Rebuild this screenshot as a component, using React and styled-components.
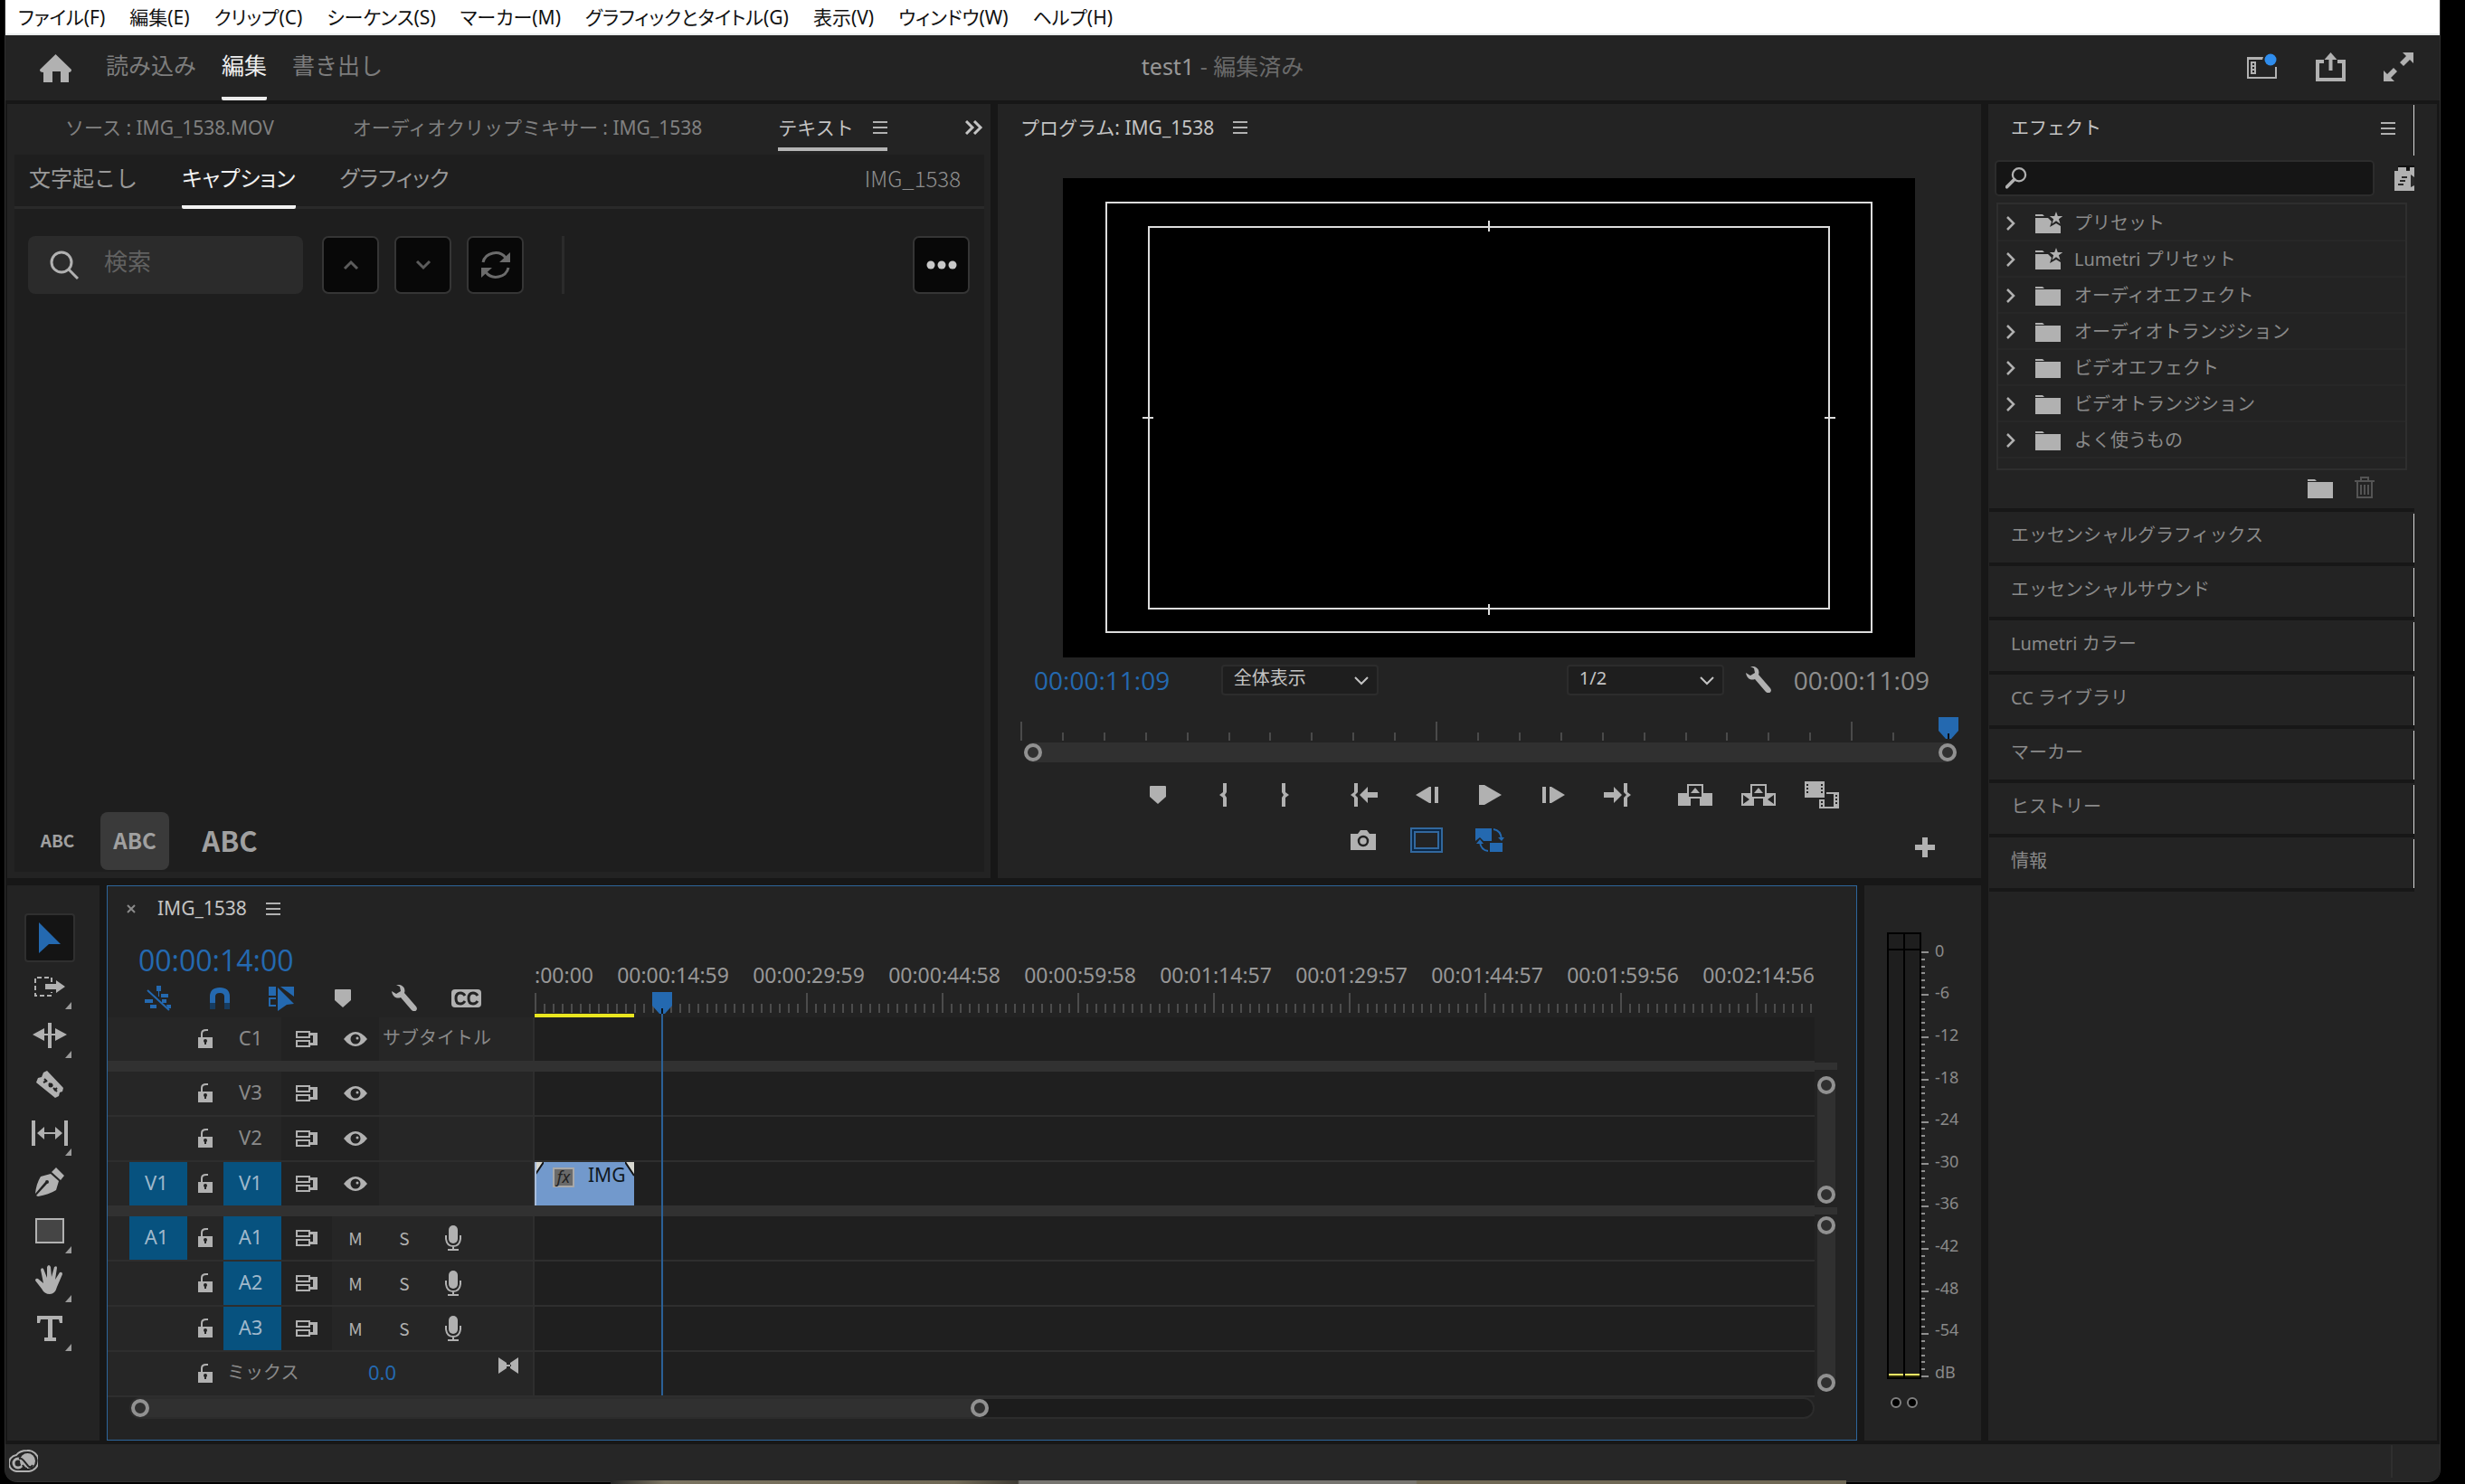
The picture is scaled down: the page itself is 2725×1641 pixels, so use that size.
import React, { useState } from "react";
import styled, { createGlobalStyle } from "styled-components";

const colors = {
  gutter: "#171717",
  panel: "#232323",
  inner: "#1e1e1e",
  line: "#2e2e2e",
  bar: "#303030",
  icon: "#b1b1b1",
  text: "#8a8a8a",
  bright: "#c4c4c4",
  blue: "#2469b0",
  patch: "#07527f",
};

const GlobalStyle = createGlobalStyle`
  * {
    box-sizing: border-box;
  }
  body {
    margin: 0;
    background: #000;
    color: ${colors.text};
    font-family: "Noto Sans", "Noto Sans CJK JP", sans-serif;
    font-size: 20px;
    line-height: 24px;
  }
  button, input, select {
    font: inherit;
    color: inherit;
    border: 0;
    padding: 0;
    margin: 0;
    background: none;
  }
  svg {
    display: block;
    flex: none;
  }
`;

// Window frame
const Page = styled.div`
  min-height: 100vh;
  display: flex;
  flex-direction: column;
  padding: 0 27px 0 5px;
`;

const Window = styled.div`
  flex: 1;
  display: flex;
  flex-direction: column;
  background: ${colors.gutter};
  border: solid #303030;
  border-width: 0 1px 1px;
  border-radius: 0 0 14px 14px;
  overflow: hidden;
`;

const DesktopStrip = styled.div`
  position: relative;
  height: 4px;
  margin: -2px 657px 0 670px;
  background: linear-gradient(90deg, #262626, #7b7461 60px, #6f6855 380px, #3d3a33 450px, #777570 452px, #777570 890px, #6f6855 892px);
`;

const MenuBar = styled.nav`
  display: flex;
  gap: 27px;
  height: 39px;
  padding: 1px 14px 0;
  background: #fff;
  border-bottom: 2px solid #e9ecec;
`;

const MenuItem = styled.button`
  color: #111;
  font-size: 21px;
  font-feature-settings: "palt";
  white-space: nowrap;
`;

const Header = styled.header`
  display: grid;
  grid-template-columns: 1fr auto 1fr;
  height: 72px;
  background: ${colors.panel};
`;

const HeaderLeft = styled.div`
  display: flex;
  align-items: stretch;
  padding-left: 38px;
`;

const HomeButton = styled.button`
  margin-right: 38px;
`;

const ModeTab = styled.button`
  font-size: 25px;
  margin-right: 28px;
  padding-bottom: 2px;
  color: ${(props) => (props.$active ? "#f0f0f0" : "#7d7d7d")};
  border-bottom: 4px solid ${(props) => (props.$active ? "#ececec" : "transparent")};
  border-radius: 2px;
`;

const ProjectTitle = styled.div`
  align-self: center;
  font-size: 25px;
  padding-bottom: 4px;
  color: #6a6a6a;

  strong {
    font-weight: 400;
    color: #979797;
  }
`;

const HeaderRight = styled.div`
  display: flex;
  justify-content: flex-end;
  align-items: center;
  gap: 42px;
  padding: 0 29px 3px 0;
`;

const Workspace = styled.main`
  flex: 1;
  display: grid;
  grid-template-columns: minmax(0, 1fr) 496px;
  gap: 8px;
  padding: 4px 3px 4px 2px;
`;

const MainColumn = styled.div`
  display: flex;
  flex-direction: column;
  gap: 8px;
`;

const Upper = styled.div`
  display: grid;
  grid-template-columns: 1fr 1fr;
  gap: 8px;
`;

const Lower = styled.div`
  flex: 1;
  display: grid;
  grid-template-columns: 102px minmax(0, 1fr) 129px;
  gap: 8px;
`;

const Panel = styled.section`
  background: ${colors.panel};
  display: flex;
  flex-direction: column;
`;

const PanelTabs = styled.div`
  display: flex;
  height: 56px;
  padding: 0 8px 4px ${(props) => props.$indent || 25}px;
  font-size: 21px;
`;

const PanelTab = styled.button`
  display: flex;
  align-items: center;
  gap: 21px;
  margin-right: ${(props) => props.$after || 0}px;
  padding-top: 3px;
  color: ${(props) => (props.$active ? colors.bright : "#808080")};
  border-bottom: 4px solid ${(props) => (props.$underline ? "#b5b5b5" : "transparent")};
  white-space: nowrap;
`;

const Spacer = styled.div`
  flex: 1;
`;

// Text panel
const TextBody = styled.div`
  flex: 1;
  display: flex;
  flex-direction: column;
  margin: 0 7px 7px 8px;
  background: ${colors.inner};
`;

const SubTabs = styled.div`
  display: flex;
  height: 60px;
  padding: 0 26px 0 16px;
  border-bottom: 3px solid #2a2a2a;
  font-size: 24px;
`;

const SubTab = styled.button`
  height: 60px;
  margin-right: 49px;
  padding-bottom: 4px;
  font-feature-settings: ${(props) => (props.$tight ? '"palt"' : "normal")};
  color: ${(props) => (props.$active ? "#f2f2f2" : "#999")};
  border-bottom: 4px solid ${(props) => (props.$active ? "#f2f2f2" : "transparent")};
  border-radius: 2px;
`;

const ClipName = styled.span`
  align-self: center;
  padding-bottom: 6px;
  font-family: "Noto Sans CJK JP", sans-serif;
  font-weight: 300;
  color: #8f8f8f;
`;

const SearchRow = styled.div`
  display: flex;
  gap: 17px;
  padding: 30px 16px 0 15px;
`;

const CaptionSearch = styled.label`
  display: flex;
  align-items: center;
  gap: 28px;
  width: 304px;
  height: 64px;
  margin-right: 4px;
  padding-left: 24px;
  background: #2b2b2b;
  border-radius: 8px;

  input {
    width: 180px;
    padding-bottom: 8px;
    font-size: 26px;
    line-height: 30px;
    outline: 0;
  }
  input::placeholder {
    color: #616161;
  }
`;

const SquareButton = styled.button`
  display: grid;
  place-items: center;
  width: 63px;
  height: 64px;
  background: #080808;
  border: 2px solid #353535;
  border-radius: 7px;
`;

const Divider = styled.div`
  width: 3px;
  margin-left: 25px;
  background: #2b2b2b;
`;

const SizeRow = styled.div`
  display: flex;
  align-items: center;
  height: 66px;
  padding-bottom: 2px;
`;

const SizeButton = styled.button`
  width: ${(props) => props.$width}px;
  height: 64px;
  padding-bottom: 2px;
  font-size: ${(props) => props.$size}px;
  font-family: "Noto Sans CJK JP", sans-serif;
  font-weight: 700;
  color: #a0a0a0;
  background: ${(props) => (props.$active ? "#3a3a3a" : "transparent")};
  border-radius: 8px;
`;

// Program monitor
const Screen = styled.div`
  position: relative;
  aspect-ratio: 16 / 9;
  margin: 26px 73px 8px 72px;
  background: #000;
`;

const SafeArea = styled.div`
  position: absolute;
  inset: ${(props) => props.$inset};
  border: 2px solid #dcdcdc;
`;

const SafeTick = styled.div`
  position: absolute;
  background: #dcdcdc;
  width: ${(props) => (props.$vertical ? 2 : 12)}px;
  height: ${(props) => (props.$vertical ? 12 : 2)}px;
  top: ${(props) => props.$top};
  left: ${(props) => props.$left};
  transform: translate(-50%, -50%);
`;

const MonitorControls = styled.div`
  display: flex;
  align-items: center;
  height: 34px;
  padding: 0 57px 0 40px;
`;

const Timecode = styled.span`
  font-family: "Open Sans", "Noto Sans", sans-serif;
  font-size: ${(props) => props.$size}px;
  line-height: 36px;
  font-weight: 500;
  color: ${(props) => (props.$muted ? "#8f8f8f" : colors.blue)};
`;

const SelectBox = styled.label`
  position: relative;
  display: block;
  width: 174px;
  height: 34px;
  background: ${colors.inner};
  border: 2px solid #2c2c2c;
  border-radius: 4px;

  select {
    width: 100%;
    height: 26px;
    padding-left: 12px;
    appearance: none;
    color: ${colors.bright};
    font-size: 20px;
    line-height: 24px;
  }
  svg {
    position: absolute;
    right: 8px;
    top: 8px;
  }
`;

const MonitorRuler = styled.div`
  position: relative;
  margin: 24px 25px 0;
`;

const RulerCells = styled.div`
  display: grid;
  grid-template-columns: repeat(22, 1fr);
  align-items: end;
  height: 28px;
  padding: 0 27px 2px 0;
`;

const RulerCell = styled.div`
  height: ${(props) => (props.$major ? 21 : 9)}px;
  border-left: 2px solid #4a4a4a;
`;

const HandleBar = styled.div`
  display: flex;
  flex-direction: ${(props) => (props.$vertical ? "column" : "row")};
  justify-content: space-between;
  align-items: center;
  background: ${colors.bar};
  border-radius: 11px;
`;

const MonitorBar = styled(HandleBar)`
  height: 22px;
  margin: 0 2px 0 4px;
`;

const Handle = styled.button`
  width: 20px;
  height: 20px;
  border: 4px solid #919191;
  border-radius: 50%;
`;

const MonitorPlayhead = styled.div`
  position: absolute;
  top: 0;
  right: 0;
`;

const Transport = styled.div`
  display: flex;
  justify-content: center;
  height: 50px;
  margin-top: 11px;
`;

const TransportButton = styled.button`
  display: grid;
  place-items: center;
  width: ${(props) => props.$width || 70}px;
  height: 50px;
`;

const TransportGroup = styled.div`
  display: flex;
  margin-right: ${(props) => props.$after || 0}px;
`;

const SecondRow = styled.div`
  display: grid;
  grid-template-columns: 1fr auto 1fr;
  align-items: center;
  height: 50px;
  margin-bottom: 17px;
  padding: 0 51px;
`;

const FrameTools = styled(TransportGroup)`
  grid-column: 2;
`;

const AddButton = styled.button`
  justify-self: end;
  padding-top: 16px;
`;

// Effects panel
const SidePanel = styled(Panel)`
  padding-right: 25px;
`;

const SideTitle = styled.div`
  display: flex;
  justify-content: space-between;
  align-items: center;
  height: 56px;
  margin-top: 1px;
  padding: 0 20px 4px 25px;
  color: ${colors.bright};
  border-right: 1px solid #d8d8d8;
`;

const EffectSearchRow = styled.div`
  display: flex;
  align-items: center;
  justify-content: space-between;
  padding: 5px 0 7px 7px;
`;

const EffectSearch = styled.label`
  display: flex;
  align-items: center;
  gap: 12px;
  width: 420px;
  height: 40px;
  padding-left: 10px;
  background: #151515;
  border: 2px solid #2c2c2c;
  border-radius: 5px;

  input {
    flex: 1;
    outline: 0;
  }
`;

const EffectList = styled.ul`
  margin: 0 8px 0 9px;
  padding: 1px 0 11px;
  list-style: none;
  border: 2px solid ${colors.line};
`;

const EffectItem = styled.li`
  border-bottom: 2px solid #272727;
`;

const EffectButton = styled.button`
  display: flex;
  align-items: center;
  width: 100%;
  height: 38px;
  padding: 2px 0 0 9px;
`;

const EffectIcon = styled.span`
  width: 30px;
  margin: 0 13px 2px 20px;
`;

const EffectFooter = styled.div`
  display: flex;
  justify-content: flex-end;
  align-items: center;
  gap: 24px;
  height: 42px;
  padding: 0 44px 4px 0;
`;

const Collapsed = styled.button`
  height: 60px;
  margin-left: 1px;
  padding: 0 0 4px 24px;
  text-align: left;
  border-top: 4px solid ${colors.gutter};
  background: linear-gradient(#d8d8d8, #d8d8d8) no-repeat right 2px / 1px 100%;
`;

const CollapsedEnd = styled.div`
  height: 4px;
  margin-left: 1px;
  background: ${colors.gutter};
`;

// Tools
const ToolPanel = styled(Panel)`
  align-items: center;
  padding: 31px 8px 0 0;
`;

const Tool = styled.button`
  position: relative;
  display: grid;
  place-items: center;
  width: 56px;
  height: 54px;
  background: ${(props) => (props.$active ? "#141414" : "transparent")};
  border: 2px solid ${(props) => (props.$active ? "#2f2f2f" : "transparent")};
  border-radius: 4px;
`;

const Corner = styled.span`
  position: absolute;
  right: 2px;
  bottom: 0;
  width: 7px;
  height: 8px;
  background: #9a9a9a;
  clip-path: polygon(100% 0, 100% 100%, 0 100%);
`;

// Timeline
const Timeline = styled(Panel)`
  border: 1px solid #2d659b;
`;

const TimelineTabs = styled.div`
  display: flex;
  align-items: center;
  height: 50px;
  padding-left: 21px;
  font-size: 21px;
  color: ${colors.bright};

  span {
    margin: 0 21px 2px 24px;
  }
`;

const TimelineBody = styled.div`
  display: flex;
`;

const TrackArea = styled.div`
  position: relative;
  flex: 1;
  min-width: 0;
`;

const TimelineTop = styled.div`
  display: flex;
  height: 95px;
`;

const TimelineTools = styled.div`
  width: 472px;
  padding: 14px 0 0 34px;
`;

const ToolStrip = styled.div`
  display: flex;
  padding-top: 4px;
  margin-left: -12px;
`;

const StripButton = styled.button`
  display: grid;
  place-items: center;
  width: 68px;
  height: 40px;
`;

const Ruler = styled.div`
  flex: 1;
  min-width: 0;
  overflow: hidden;
  padding-top: 35px;
`;

const RulerLabels = styled.div`
  display: flex;
  font-size: 23px;
  line-height: 26px;
  color: #979797;
  white-space: nowrap;
`;

const RulerLabel = styled.span`
  flex: none;
  width: ${(props) => (props.$first ? 78 : 150)}px;
  text-align: ${(props) => (props.$first ? "left" : "center")};
`;

const RulerTicks = styled.div`
  height: 22px;
  margin-top: 7px;
  background: repeating-linear-gradient(90deg, #4c4c4c 0 2px, transparent 2px 150px),
    repeating-linear-gradient(90deg, #4c4c4c 0 2px, transparent 2px 10px) bottom / 100% 10px no-repeat;
`;

const RenderBar = styled.div`
  width: 110px;
  height: 4px;
  margin-top: 1px;
  background: #e9e61f;
`;

const Track = styled.div`
  display: flex;
  height: 50px;
  border-bottom: 2px solid ${colors.line};
`;

const TrackGap = styled.div`
  height: ${(props) => props.$height}px;
  margin-top: -2px;
  background: #313131;
`;

const TrackHead = styled.div`
  display: flex;
  align-items: center;
  width: 472px;
  padding-left: 24px;
  background: #262626;
  border-right: 2px solid ${colors.line};
`;

const Lane = styled.div`
  flex: 1;
  display: flex;
  background: #1f1f1f;
`;

const Patch = styled.button`
  width: 64px;
  height: 48px;
  padding: 0 4px 4px 0;
  font-size: 22px;
  background: ${(props) => (props.$on ? colors.patch : "transparent")};
  color: ${(props) => (props.$on ? "#9fb8cb" : "#8a8a8a")};
`;

const Cell = styled.button`
  display: grid;
  place-items: center;
  width: ${(props) => props.$width}px;
  height: 48px;
  background: ${(props) => (props.$dark ? "#222" : "transparent")};
  color: #b1b1b1;
  font-size: 19px;
  line-height: 20px;
  font-family: "Noto Sans CJK JP", sans-serif;
`;

const TrackName = styled.span`
  padding: 0 0 2px 4px;
`;

const MixName = styled.span`
  width: 160px;
  padding: 0 0 2px 4px;
`;

const MixValue = styled.button`
  width: 144px;
  padding-bottom: 4px;
  text-align: left;
  font-size: 22px;
  color: ${colors.blue};
`;

const KeyframeButton = styled.button`
  align-self: flex-start;
  padding-top: 6px;
`;

const Clip = styled.div`
  position: relative;
  display: flex;
  gap: 15px;
  width: 110px;
  height: 48px;
  padding: 6px 0 0 18px;
  overflow: hidden;
  background: #7299cc;
  color: #101820;
  border: solid #a9bddb;
  border-width: 0 0 0 2px;
  font-size: 21px;
  line-height: 16px;
`;

const FxBadge = styled.span`
  width: 24px;
  height: 22px;
  background: #6a6a6a;
  border: 2px solid #a8a8a8;
  color: #222;
  font: italic 18px/17px "Noto Sans", sans-serif;
  text-align: center;
`;

const Fold = styled.svg`
  position: absolute;
  top: 0;
  left: ${(props) => (props.$right ? "auto" : "-2px")};
  right: ${(props) => (props.$right ? "0" : "auto")};
`;

const Playhead = styled.div`
  position: absolute;
  top: 67px;
  bottom: 2px;
  left: 602px;
  width: 22px;

  &::after {
    content: "";
    position: absolute;
    top: 24px;
    bottom: 0;
    left: 10px;
    width: 2px;
    background: #2b6096;
  }
`;

const ScrollColumn = styled.div`
  display: flex;
  flex-direction: column;
  width: 25px;
  margin: 145px 21px 0 0;
`;

const ScrollGap = styled.div`
  height: 8px;
  background: #313131;
`;

const TrackScroll = styled(HandleBar)`
  width: 20px;
  height: ${(props) => props.$height}px;
  margin: ${(props) => props.$top}px 3px 4px;
`;

const ZoomRow = styled.div`
  display: flex;
  height: 24px;
  margin: 0 46px 0 24px;
  border: 2px solid #2c2c2c;
  border-radius: 12px;
  background: #1c1c1c;
`;

const ZoomBar = styled(HandleBar)`
  width: 51%;
`;

// Audio meters
const MeterPanel = styled(Panel)`
  padding: 52px 0 0 25px;
`;

const MeterRow = styled.div`
  display: flex;
`;

const Meter = styled.div`
  display: grid;
  grid-template-columns: 1fr 1fr;
  grid-template-rows: 16px 472px;
  gap: 2px;
  width: 38px;
  height: 494px;
  padding: 2px;
  background: #000;
`;

const MeterCell = styled.div`
  background: ${colors.inner};
`;

const MeterLevel = styled.div`
  background: ${colors.inner};
  border-bottom: 2px solid #2c2a08;
  box-shadow: inset 0 -2px #efe765;
`;

const Scale = styled.div`
  width: 8px;
  margin-top: 21px;
`;

const ScaleLabels = styled.ol`
  display: flex;
  flex-direction: column;
  justify-content: space-between;
  height: 490px;
  margin: 8px 0 0 7px;
  padding: 0;
  list-style: none;
  font-size: 18px;
`;

const SoloRow = styled.div`
  display: flex;
  gap: 6px;
  padding: 16px 0 0 4px;
`;

const Solo = styled.button`
  width: 12px;
  height: 12px;
  background: #000;
  border: 2px solid #808080;
  border-radius: 50%;
`;

const StatusBar = styled.footer`
  display: flex;
  align-items: center;
  height: 41px;
  padding: 0 52px 4px 4px;
  background: #262626;
`;

const StatusLine = styled.div`
  width: 2px;
  height: 36px;
  margin-left: auto;
  background: #2f2f2f;
`;

// Icons
const Svg = ({ w, h, children, color = colors.icon }) => (
  <svg width={w} height={h} viewBox={`0 0 ${w} ${h}`} fill={color} stroke="none" aria-hidden="true">
    {children}
  </svg>
);

const Burger = () => (
  <Svg w={16} h={14}>
    <path d="M0 0h16v2H0zM0 6h16v2H0zM0 12h16v2H0z" />
  </Svg>
);

const Chevron = ({ dir = "down", color = colors.icon, w = 3 }) => {
  const paths = { down: "M2 4l7 7 7-7", up: "M2 12l7-7 7 7" };
  return (
    <svg width="18" height="16" viewBox="0 0 18 16" fill="none" stroke={color} strokeWidth={w} aria-hidden="true">
      <path d={paths[dir]} />
    </svg>
  );
};

const Home = () => (
  <Svg w={35} h={31}>
    <path d="M17.5 0L35 17c0 2-1 3-3 3v11h-9V19h-9v12H4V20c-3 0-4-1-4-3z" />
  </Svg>
);

const Magnifier = ({ flip }) => (
  <svg width={flip ? 24 : 32} height={flip ? 24 : 32} viewBox="0 0 32 32" fill="none" stroke={colors.icon} strokeWidth="3" aria-hidden="true">
    {flip ? (
      <g>
        <circle cx="20" cy="11" r="9.5" />
        <path d="M13 18L2 29" strokeWidth="5" strokeLinecap="round" />
      </g>
    ) : (
      <g>
        <circle cx="13" cy="13" r="11" />
        <path d="M21 21l10 10" />
      </g>
    )}
  </svg>
);

const Refresh = () => (
  <svg width="34" height="32" viewBox="0 0 34 32" fill="none" stroke="#6b6b6b" strokeWidth="3" aria-hidden="true">
    <path d="M3 13A14 13 0 0 1 28 8M31 19A14 13 0 0 1 6 24" />
    <path d="M33 2v11H21zM1 30V19h12z" fill="#6b6b6b" stroke="none" />
  </svg>
);

const Dots = () => (
  <Svg w={34} h={10} color="#c8c8c8">
    <circle cx="5" cy="5" r="4.5" />
    <circle cx="17" cy="5" r="4.5" />
    <circle cx="29" cy="5" r="4.5" />
  </Svg>
);

const Wrench = () => (
  <Svg w={28} h={29}>
    <path d="M5 0c6-1 11 3 9 9l13 15c3 4-2 7-5 4L10 14C5 16 1 13 0 7l5 3 5-3-1-5z" />
  </Svg>
);

const MarkerIcon = () => (
  <Svg w={18} h={20}>
    <path d="M0 1q0-1 1-1h16q1 0 1 1v11l-9 8-9-8z" />
  </Svg>
);

const PlayheadIcon = () => (
  <Svg w={22} h={24} color={colors.blue}>
    <path d="M0 0h22v15l-8 9H8L0 15z" />
    <path d="M10 18h2v6h-2z" fill="#0b1118" />
  </Svg>
);

const Folder = ({ star }) => (
  <Svg w={star ? 30 : 28} h={24}>
    {star ? (
      <g>
        <path d="M0 3h8l2 2H0zM0 7h14l4 4-2 6 7-4 5 3v8H0z" />
        <path d="M23 0l1.8 5h5.4l-4.3 3.3 1.6 5.2L23 10.300l-4.500 3.200 1.600-5.200L15.800 5h5.400z" />
      </g>
    ) : (
      <path d="M0 3h8l2 2H0zM0 6h28v18H0z" />
    )}
  </Svg>
);

const Trash = () => (
  <svg width="22" height="24" viewBox="0 0 22 24" fill="none" stroke="#545454" strokeWidth="2" aria-hidden="true">
    <path d="M0 5h22M7 5V1h8v4M3 6v17h16V6M7 9v11M11 9v11M15 9v11" />
  </svg>
);

const Fx32 = () => (
  <Svg w={22} h={28}>
    <path d="M4 0h14v5H4zM18 0h4v5h-4z" fill="#101010" />
    <path d="M0 6h4V2h9v4h4V2h5v26H0z" />
    <path d="M8 12h6v2H8zM6 16h6v2H6zM4 20h6v2H4zM18 10l4 3v9l-4 2z" fill="#2a2a2a" />
  </Svg>
);

const WorkspaceIcon = () => (
  <Svg w={34} h={30}>
    <path d="M0 4h18l-1 3H2v19h29V15h2v13H0z" />
    <path fillRule="evenodd" d="M4 9h6v14H4zM6 11v2h2v-2zM6 15v2h2v-2zM6 19v2h2v-2z" />
    <circle cx="26" cy="7" r="6.5" fill="#2f8ded" />
  </Svg>
);

const ShareIcon = () => (
  <Svg w={33} h={32}>
    <path d="M0 8h9v4H4v16h25V12h-5V8h9v24H0z" />
    <path d="M16.5 0l7 8h-5v12h-4V8h-5z" />
  </Svg>
);

const ExpandIcon = () => (
  <Svg w={33} h={32}>
    <path d="M21 0h12v12l-4-4-7 7-4-4 7-7zM12 32H0V20l4 4 7-7 4 4-7 7z" />
  </Svg>
);

const Brace = ({ right }) => (
  <Svg w={8} h={26}>
    {right ? <path d="M0 0h4v10l4 3-4 3v10H0V16l2-3-2-3z" /> : <path d="M8 0H4v10l-4 3 4 3v10h4V16l-2-3 2-3z" />}
  </Svg>
);

const GoIn = ({ out }) => (
  <Svg w={30} h={26}>
    <g transform={out ? "matrix(-1 0 0 1 30 0)" : undefined}>
      <path d="M8 0H4v10l-4 3 4 3v10h4V16l-3-3 3-3zM10 13l9-9v6h11v6H19v6z" />
    </g>
  </Svg>
);

const Step = ({ forward }) => (
  <Svg w={25} h={18}>
    <g transform={forward ? "matrix(-1 0 0 1 25 0)" : undefined}>
      <path d="M0 9L15 0h2v18h-2zM21 0h4v18h-4z" />
    </g>
  </Svg>
);

const Play = () => (
  <Svg w={25} h={22}>
    <path d="M0 0h6l19 11L6 22H0z" />
  </Svg>
);

const Lift = ({ extract }) => (
  <Svg w={38} h={24}>
    <path fillRule="evenodd" d="M10 10V0h18v10h10v14H24v-8H14v8H0V10zM12 2v12h14V2z" />
    <path d="M19 4l5 6H14z" />
    {extract && <path d="M2 12v10l7-5zM36 12v10l-7-5z" fill={colors.panel} />}
  </Svg>
);

const Compare = () => (
  <Svg w={38} h={30}>
    <path d="M0 0h22v18H0z" />
    <path fillRule="evenodd" d="M24 12h14v18H16V20h6v8h10V14h-8z" />
    <path
      d="M2 3h2v2H2zM2 7h2v2H2zM2 11h2v2H2zM18 3h2v2h-2zM18 7h2v2h-2zM18 11h2v2h-2zM34 15h2v2h-2zM34 19h2v2h-2zM34 23h2v2h-2zM18 22h2v2h-2zM18 26h2v2h-2z"
      fill={colors.panel}
    />
  </Svg>
);

const Camera = () => (
  <Svg w={28} h={22}>
    <path d="M0 4h8l3-4h7l3 4h7v18H0z" />
    <circle cx="14" cy="12" r="5" fill="none" stroke="#222" strokeWidth="2.5" />
  </Svg>
);

const SafeIcon = () => (
  <svg width="36" height="28" viewBox="0 0 36 28" fill="none" stroke="#32689e" strokeWidth="2" aria-hidden="true">
    <path d="M1 1h34v26H1z" fill="#0b2745" />
    <path d="M5 5h26v18H5z" fill={colors.panel} />
  </svg>
);

const ProxyIcon = () => (
  <Svg w={32} h={26} color={colors.blue}>
    <path d="M0 0h18v14H9l-4-4-5 4zM16 16h14v10H16z" />
    <path d="M20 1q8 1 9 11M5 15q1 9 9 10" fill="none" stroke={colors.blue} strokeWidth="2" />
    <path d="M25 10h7l-3 4zM1 17h8l-4-5z" />
  </Svg>
);

const Plus = () => (
  <Svg w={22} h={22}>
    <path d="M8 0h6v8h8v6h-8v8H8v-8H0V8h8z" />
  </Svg>
);

const Lock = () => (
  <Svg w={16} h={21}>
    <path fillRule="evenodd" d="M0 9h16v12H0zM7 12v5h2v-5z" />
    <path d="M4 10V5q0-4 5-4h2" fill="none" stroke={colors.icon} strokeWidth="2" />
    <circle cx="8" cy="13" r="2" fill="#222" />
  </Svg>
);

const Sync = () => (
  <Svg w={24} h={18}>
    <path fillRule="evenodd" d="M0 0h16v8H0zM2 2v4h12V2zM0 10h16v8H0zM2 12v4h12v-4z" />
    <path d="M15 2h9v14h-9v-3h4V5h-4z" />
  </Svg>
);

const Eye = () => (
  <Svg w={26} h={16}>
    <path d="M0 8q13-16 26 0-13 16-26 0z" />
    <circle cx="13" cy="8" r="5.5" fill="#222" />
    <circle cx="15" cy="7" r="1.5" />
  </Svg>
);

const Mic = () => (
  <Svg w={18} h={28}>
    <rect x="4" y="0" width="10" height="20" rx="5" />
    <path d="M1 11v4q1 8 8 8t8-8v-4M9 23v4M3 27h12" fill="none" stroke={colors.icon} strokeWidth="2" />
  </Svg>
);

const Bowtie = () => (
  <Svg w={22} h={18}>
    <path d="M0 0l9 6v6l-9 6zM22 0l-9 6v6l9 6zM8 8h6v2H8z" />
  </Svg>
);

const NestIcon = () => (
  <Svg w={30} h={28} color={colors.blue}>
    <path d="M13 0h5v6h-2v6h-1V6h-2zM18 9h8v4h-8zM0 15h9v4H0zM19 15h5v4h-5zM6 21h7v4H6zM24 21h5v4h-4z" />
    <path d="M3 5l24 22" stroke={colors.blue} strokeWidth="2" />
  </Svg>
);

const Magnet = () => (
  <svg width="24" height="26" viewBox="0 0 24 26" fill="none" strokeWidth="6" aria-hidden="true">
    <path d="M4 18v-7q0-7 8-7t8 7v7" stroke={colors.blue} />
    <path d="M4 18v7M20 18v7" stroke="#173c60" />
  </svg>
);

const Linked = () => (
  <Svg w={28} h={28} color={colors.blue}>
    <path d="M0 1h8v10H0zM13 1h15v11zM10 2l18 18-8 1-10 7z" />
    <path d="M8 14H1v8h7" fill="none" stroke={colors.blue} strokeWidth="2" />
  </Svg>
);

const CcIcon = () => (
  <Svg w={33} h={20}>
    <rect width="33" height="20" rx="4" />
    <path d="M15 7q-2-3-5-3-5 0-5 6t5 6q3 0 5-3M29 7q-2-3-5-3-5 0-5 6t5 6q3 0 5-3" fill="none" stroke="#222" strokeWidth="3" />
  </Svg>
);

const CreativeCloud = () => (
  <Svg w={32} h={25}>
    <path d="M20 1a11 11 0 0 1 2 23H10A9 9 0 0 1 8 6q4-5 12-5z" fill="none" stroke={colors.icon} strokeWidth="2" />
    <circle cx="20.500" cy="12.500" r="8.500" />
    <circle cx="10" cy="15" r="5" fill="none" stroke={colors.icon} strokeWidth="3" />
    <path d="M11 10q3-1 5 2l5 6q3 3 5-1M15 17q2 4 5 4" fill="none" stroke="#262626" strokeWidth="2" />
  </Svg>
);

const toolIcons = {
  選択: (
    <Svg w={24} h={34} color={colors.blue}>
      <path d="M0 0l24 24H11L0 34z" />
    </Svg>
  ),
  トラック選択: (
    <Svg w={34} h={22}>
      <path d="M1 7V1h18v5M1 10v11h18v-4" fill="none" stroke={colors.icon} strokeWidth="2" strokeDasharray="5 3" />
      <path d="M12 8h12V4l10 7-10 7v-4H12z" />
    </Svg>
  ),
  リップル: (
    <Svg w={38} h={28}>
      <path d="M17 0h4v28h-4zM0 13l13-7v6h12V6l13 7-13 7v-6H13v6z" />
    </Svg>
  ),
  レーザー: (
    <Svg w={30} h={30}>
      <path d="M8 2l4-2 18 19-1 4-3 1-1 4-4 2L0 13l2-5 4-1z" />
      <path d="M9 9l3 3M14 14l4 3M19 19l4 4M8 13l4-2M20 22l3-3" stroke="#222" strokeWidth="2" />
      <circle cx="16" cy="16" r="2.5" fill="#222" />
    </Svg>
  ),
  スリップ: (
    <Svg w={40} h={28}>
      <path d="M0 0h4v28H0zM36 0h4v28h-4zM6 14l8-7v6h12V7l8 7-8 7v-6H14v6z" />
    </Svg>
  ),
  ペン: (
    <Svg w={32} h={32}>
      <path d="M23 0l9 9-4 5-10-9zM17 7l9 8-3 10q-8 5-20 7l-2-1 12-13a2 2 0 1 0-2-2L0 29Q1 18 6 10z" />
    </Svg>
  ),
  長方形: (
    <svg width="32" height="28" viewBox="0 0 32 28" fill="#454545" stroke={colors.icon} strokeWidth="2" aria-hidden="true">
      <path d="M1 1h30v26H1z" />
    </svg>
  ),
  手のひら: (
    <Svg w={32} h={33}>
      <path d="M9 21L6 6q1-3 3-1l4 10V3q2-4 4 0l1 11 3-11q3-2 3 1l-2 13 5-8q3-1 3 2l-6 14q-2 8-8 8-6 0-9-6l-7-9q0-3 3-2z" />
    </Svg>
  ),
  文字: (
    <Svg w={28} h={28}>
      <path d="M0 0h28v8h-3l-1-4h-7v20h4v4H8v-4h4V4H4L3 8H0z" />
    </Svg>
  ),
};

const menus = [
  "ファイル(F)",
  "編集(E)",
  "クリップ(C)",
  "シーケンス(S)",
  "マーカー(M)",
  "グラフィックとタイトル(G)",
  "表示(V)",
  "ウィンドウ(W)",
  "ヘルプ(H)",
];

const effects = [
  { name: "プリセット", star: true },
  { name: "Lumetri プリセット", star: true },
  { name: "オーディオエフェクト" },
  { name: "オーディオトランジション" },
  { name: "ビデオエフェクト" },
  { name: "ビデオトランジション" },
  { name: "よく使うもの" },
];

const collapsed = [
  "エッセンシャルグラフィックス",
  "エッセンシャルサウンド",
  "Lumetri カラー",
  "CC ライブラリ",
  "マーカー",
  "ヒストリー",
  "情報",
];

const rulerLabels = [
  "00:00:14:59",
  "00:00:29:59",
  "00:00:44:58",
  "00:00:59:58",
  "00:01:14:57",
  "00:01:29:57",
  "00:01:44:57",
  "00:01:59:56",
  "00:02:14:56",
];

const levels = ["0", "-6", "-12", "-18", "-24", "-30", "-36", "-42", "-48", "-54", "dB"];

const VideoTrack = ({ id, source, targeted, name, children }) => (
  <Track>
    <TrackHead>
      <Patch $on={!!source} aria-label={source ? undefined : "ソースのパッチ"}>{source}</Patch>
      <Cell $width={40} aria-label="ロック"><Lock /></Cell>
      <Patch $on={targeted}>{id}</Patch>
      <Cell $width={56} $dark aria-label="同期ロック"><Sync /></Cell>
      <Cell $width={52} $dark aria-label="トラック出力"><Eye /></Cell>
      <TrackName>{name}</TrackName>
    </TrackHead>
    <Lane>{children}</Lane>
  </Track>
);

const AudioTrack = ({ id, source }) => (
  <Track>
    <TrackHead>
      <Patch $on={!!source} aria-label={source ? undefined : "ソースのパッチ"}>{source}</Patch>
      <Cell $width={40} aria-label="ロック"><Lock /></Cell>
      <Patch $on>{id}</Patch>
      <Cell $width={56} $dark aria-label="同期ロック"><Sync /></Cell>
      <Cell $width={52}>M</Cell>
      <Cell $width={56}>S</Cell>
      <Cell $width={52} aria-label="録音"><Mic /></Cell>
    </TrackHead>
    <Lane />
  </Track>
);

const TextPanel = () => {
  const [tab, setTab] = useState("キャプション");
  return (
    <Panel>
      <PanelTabs $indent={64}>
        <PanelTab $after={87}>ソース : IMG_1538.MOV</PanelTab>
        <PanelTab $after={84}>オーディオクリップミキサー : IMG_1538</PanelTab>
        <PanelTab $active $underline>
          テキスト <Burger />
        </PanelTab>
        <Spacer />
        <PanelTab $active aria-label="その他のパネル">
          <svg width="20" height="16" viewBox="0 0 20 16" fill="none" stroke={colors.bright} strokeWidth="3">
            <path d="M1 1l7 7-7 7M10 1l7 7-7 7" />
          </svg>
        </PanelTab>
      </PanelTabs>
      <TextBody>
        <SubTabs>
          {["文字起こし", "キャプション", "グラフィック"].map((name, i) => (
            <SubTab key={name} $tight={i > 0} $active={tab === name} onClick={() => setTab(name)}>
              {name}
            </SubTab>
          ))}
          <Spacer />
          <ClipName>IMG_1538</ClipName>
        </SubTabs>
        <SearchRow>
          <CaptionSearch>
            <Magnifier />
            <input placeholder="検索" aria-label="検索" />
          </CaptionSearch>
          <SquareButton aria-label="前へ"><Chevron dir="up" color="#5c5c5c" /></SquareButton>
          <SquareButton aria-label="次へ"><Chevron color="#5c5c5c" /></SquareButton>
          <SquareButton aria-label="置換"><Refresh /></SquareButton>
          <Divider />
          <Spacer />
          <SquareButton aria-label="その他"><Dots /></SquareButton>
        </SearchRow>
        <Spacer />
        <SizeRow>
          <SizeButton $width={95} $size={19}>ABC</SizeButton>
          <SizeButton $width={76} $size={24} $active>ABC</SizeButton>
          <SizeButton $width={134} $size={31}>ABC</SizeButton>
        </SizeRow>
      </TextBody>
    </Panel>
  );
};

const ProgramPanel = () => (
  <Panel>
    <PanelTabs>
      <PanelTab $active>
        プログラム: IMG_1538 <Burger />
      </PanelTab>
    </PanelTabs>
    <Screen>
      <SafeArea $inset="5%" />
      <SafeArea $inset="10%" />
      <SafeTick $vertical $left="50%" $top="10%" />
      <SafeTick $vertical $left="50%" $top="90%" />
      <SafeTick $left="10%" $top="50%" />
      <SafeTick $left="90%" $top="50%" />
    </Screen>
    <MonitorControls>
      <Timecode $size={28}>00:00:11:09</Timecode>
      <Spacer />
      <TransportGroup $after={208}>
        <SelectBox>
          <select aria-label="ズームレベル">
            <option>全体表示</option>
          </select>
          <Chevron w={2} color={colors.bright} />
        </SelectBox>
      </TransportGroup>
      <SelectBox>
        <select aria-label="再生時の解像度">
          <option>1/2</option>
        </select>
        <Chevron w={2} color={colors.bright} />
      </SelectBox>
      <TransportButton $width={77} aria-label="設定"><Wrench /></TransportButton>
      <Timecode $size={28} $muted>00:00:11:09</Timecode>
    </MonitorControls>
    <MonitorRuler>
      <RulerCells>
        {Array.from({ length: 22 }, (_, i) => (
          <RulerCell key={i} $major={i % 10 === 0} />
        ))}
      </RulerCells>
      <MonitorBar>
        <Handle aria-label="表示範囲の開始" />
        <Handle aria-label="表示範囲の終了" />
      </MonitorBar>
      <MonitorPlayhead><PlayheadIcon /></MonitorPlayhead>
    </MonitorRuler>
    <Transport>
      <TransportGroup $after={2}>
        <TransportButton aria-label="マーカーを追加"><MarkerIcon /></TransportButton>
      </TransportGroup>
      <TransportGroup $after={18}>
        <TransportButton aria-label="インをマーク"><Brace /></TransportButton>
        <TransportButton $width={68} aria-label="アウトをマーク"><Brace right /></TransportButton>
      </TransportGroup>
      <TransportGroup $after={16}>
        <TransportButton aria-label="インへ移動"><GoIn /></TransportButton>
        <TransportButton aria-label="1 フレーム前へ"><Step /></TransportButton>
        <TransportButton aria-label="再生"><Play /></TransportButton>
        <TransportButton aria-label="1 フレーム先へ"><Step forward /></TransportButton>
        <TransportButton aria-label="アウトへ移動"><GoIn out /></TransportButton>
      </TransportGroup>
      <TransportGroup>
        <TransportButton aria-label="リフト"><Lift /></TransportButton>
        <TransportButton aria-label="抽出"><Lift extract /></TransportButton>
        <TransportButton aria-label="比較表示"><Compare /></TransportButton>
      </TransportGroup>
    </Transport>
    <SecondRow>
      <FrameTools $after={140}>
        <TransportButton aria-label="フレームを書き出し"><Camera /></TransportButton>
        <TransportButton aria-label="セーフマージン"><SafeIcon /></TransportButton>
        <TransportButton aria-label="プロキシの切り替え"><ProxyIcon /></TransportButton>
      </FrameTools>
      <AddButton aria-label="ボタンエディター"><Plus /></AddButton>
    </SecondRow>
  </Panel>
);

const TimelinePanel = () => (
  <Timeline>
    <TimelineTabs>
      <svg width="10" height="10" viewBox="0 0 10 10" stroke={colors.text} strokeWidth="2" aria-hidden="true">
        <path d="M1 1l8 8M9 1L1 9" />
      </svg>
      <span>IMG_1538</span>
      <Burger />
    </TimelineTabs>
    <TimelineBody>
      <TrackArea>
        <TimelineTop>
          <TimelineTools>
            <Timecode $size={32}>00:00:14:00</Timecode>
            <ToolStrip>
              <StripButton aria-label="ネスト"><NestIcon /></StripButton>
              <StripButton aria-label="スナップ"><Magnet /></StripButton>
              <StripButton aria-label="リンクされた選択"><Linked /></StripButton>
              <StripButton aria-label="マーカー"><MarkerIcon /></StripButton>
              <StripButton aria-label="表示設定"><Wrench /></StripButton>
              <StripButton aria-label="キャプション"><CcIcon /></StripButton>
            </ToolStrip>
          </TimelineTools>
          <Ruler>
            <RulerLabels>
              <RulerLabel $first>:00:00</RulerLabel>
              {rulerLabels.map((label) => (
                <RulerLabel key={label}>{label}</RulerLabel>
              ))}
            </RulerLabels>
            <RulerTicks />
            <RenderBar />
          </Ruler>
        </TimelineTop>
        <VideoTrack id="C1" name="サブタイトル" />
        <TrackGap $height={12} />
        <VideoTrack id="V3" />
        <VideoTrack id="V2" />
        <VideoTrack id="V1" source="V1" targeted>
          <Clip>
            <Fold width="10" height="16" viewBox="0 0 10 16">
              <path d="M0 0h9L0 14z" fill="#d8d8d0" />
              <path d="M10 0L0 15" stroke="#111" strokeWidth="2" />
            </Fold>
            <FxBadge>fx</FxBadge>
            <span>IMG</span>
            <Fold $right width="10" height="16" viewBox="0 0 10 16">
              <path d="M1 0h9v14z" fill="#d8d8d0" />
              <path d="M0 0l10 15" stroke="#111" strokeWidth="2" />
            </Fold>
          </Clip>
        </VideoTrack>
        <TrackGap $height={12} />
        <AudioTrack id="A1" source="A1" />
        <AudioTrack id="A2" />
        <AudioTrack id="A3" />
        <Track>
          <TrackHead>
            <Patch aria-label="ソースのパッチ" />
            <Cell $width={40} aria-label="ロック"><Lock /></Cell>
            <MixName>ミックス</MixName>
            <MixValue>0.0</MixValue>
            <KeyframeButton aria-label="キーフレーム"><Bowtie /></KeyframeButton>
          </TrackHead>
          <Lane />
        </Track>
        <Playhead><PlayheadIcon /></Playhead>
      </TrackArea>
      <ScrollColumn>
        <ScrollGap />
        <TrackScroll $vertical $top={7} $height={141}>
          <Handle aria-label="ビデオトラックの上端" />
          <Handle aria-label="ビデオトラックの下端" />
        </TrackScroll>
        <ScrollGap />
        <TrackScroll $vertical $top={2} $height={194}>
          <Handle aria-label="オーディオトラックの上端" />
          <Handle aria-label="オーディオトラックの下端" />
        </TrackScroll>
      </ScrollColumn>
    </TimelineBody>
    <ZoomRow>
      <ZoomBar>
        <Handle aria-label="ズームの開始" />
        <Handle aria-label="ズームの終了" />
      </ZoomBar>
    </ZoomRow>
  </Timeline>
);

const Meters = () => (
  <MeterPanel>
    <MeterRow>
      <Meter>
        <MeterCell />
        <MeterCell />
        <MeterLevel />
        <MeterLevel />
      </Meter>
      <Scale>
        <svg width="8" height="471" viewBox="0 0 8 471" stroke="#8f8f8f" strokeWidth="2" aria-hidden="true">
          {Array.from({ length: 61 }, (_, i) => (
            <path key={i} d={`M0 ${Math.round(1 + i * 7.816)}h${i % 6 === 0 ? 8 : 4}`} />
          ))}
        </svg>
      </Scale>
      <ScaleLabels>
        {levels.map((level) => (
          <li key={level}>{level}</li>
        ))}
      </ScaleLabels>
    </MeterRow>
    <SoloRow>
      <Solo aria-label="左をソロ" />
      <Solo aria-label="右をソロ" />
    </SoloRow>
  </MeterPanel>
);

const EffectsPanel = () => (
  <SidePanel>
    <SideTitle>
      エフェクト <Burger />
    </SideTitle>
    <EffectSearchRow>
      <EffectSearch>
        <Magnifier flip />
        <input aria-label="エフェクトを検索" />
      </EffectSearch>
      <button aria-label="高速処理エフェクト"><Fx32 /></button>
    </EffectSearchRow>
    <EffectList>
      {effects.map((effect) => (
        <EffectItem key={effect.name}>
          <EffectButton>
            <svg width="12" height="16" viewBox="0 0 12 16" fill="none" stroke={colors.icon} strokeWidth="2.5">
              <path d="M1 1l7 7-7 7" />
            </svg>
            <EffectIcon><Folder star={effect.star} /></EffectIcon>
            {effect.name}
          </EffectButton>
        </EffectItem>
      ))}
    </EffectList>
    <EffectFooter>
      <button aria-label="新規ビン"><Folder /></button>
      <button aria-label="削除"><Trash /></button>
    </EffectFooter>
    {collapsed.map((name) => (
      <Collapsed key={name}>{name}</Collapsed>
    ))}
    <CollapsedEnd />
  </SidePanel>
);

const App = () => {
  const [tool, setTool] = useState("選択");
  return (
    <Page>
      <GlobalStyle />
      <Window>
        <MenuBar>
          {menus.map((name) => (
            <MenuItem key={name}>{name}</MenuItem>
          ))}
        </MenuBar>
        <Header>
          <HeaderLeft>
            <HomeButton aria-label="ホーム"><Home /></HomeButton>
            <ModeTab>読み込み</ModeTab>
            <ModeTab $active>編集</ModeTab>
            <ModeTab>書き出し</ModeTab>
          </HeaderLeft>
          <ProjectTitle>
            <strong>test1</strong> - 編集済み
          </ProjectTitle>
          <HeaderRight>
            <button aria-label="ワークスペース"><WorkspaceIcon /></button>
            <button aria-label="クイック書き出し"><ShareIcon /></button>
            <button aria-label="全画面表示"><ExpandIcon /></button>
          </HeaderRight>
        </Header>
        <Workspace>
          <MainColumn>
            <Upper>
              <TextPanel />
              <ProgramPanel />
            </Upper>
            <Lower>
              <ToolPanel>
                {Object.keys(toolIcons).map((name) => (
                  <Tool key={name} $active={tool === name} aria-label={name} onClick={() => setTool(name)}>
                    {toolIcons[name]}
                    {!["選択", "レーザー", "ペン"].includes(name) && <Corner />}
                  </Tool>
                ))}
              </ToolPanel>
              <TimelinePanel />
              <Meters />
            </Lower>
          </MainColumn>
          <EffectsPanel />
        </Workspace>
        <StatusBar>
          <CreativeCloud />
          <StatusLine />
        </StatusBar>
      </Window>
      <DesktopStrip />
    </Page>
  );
};

export default App;
